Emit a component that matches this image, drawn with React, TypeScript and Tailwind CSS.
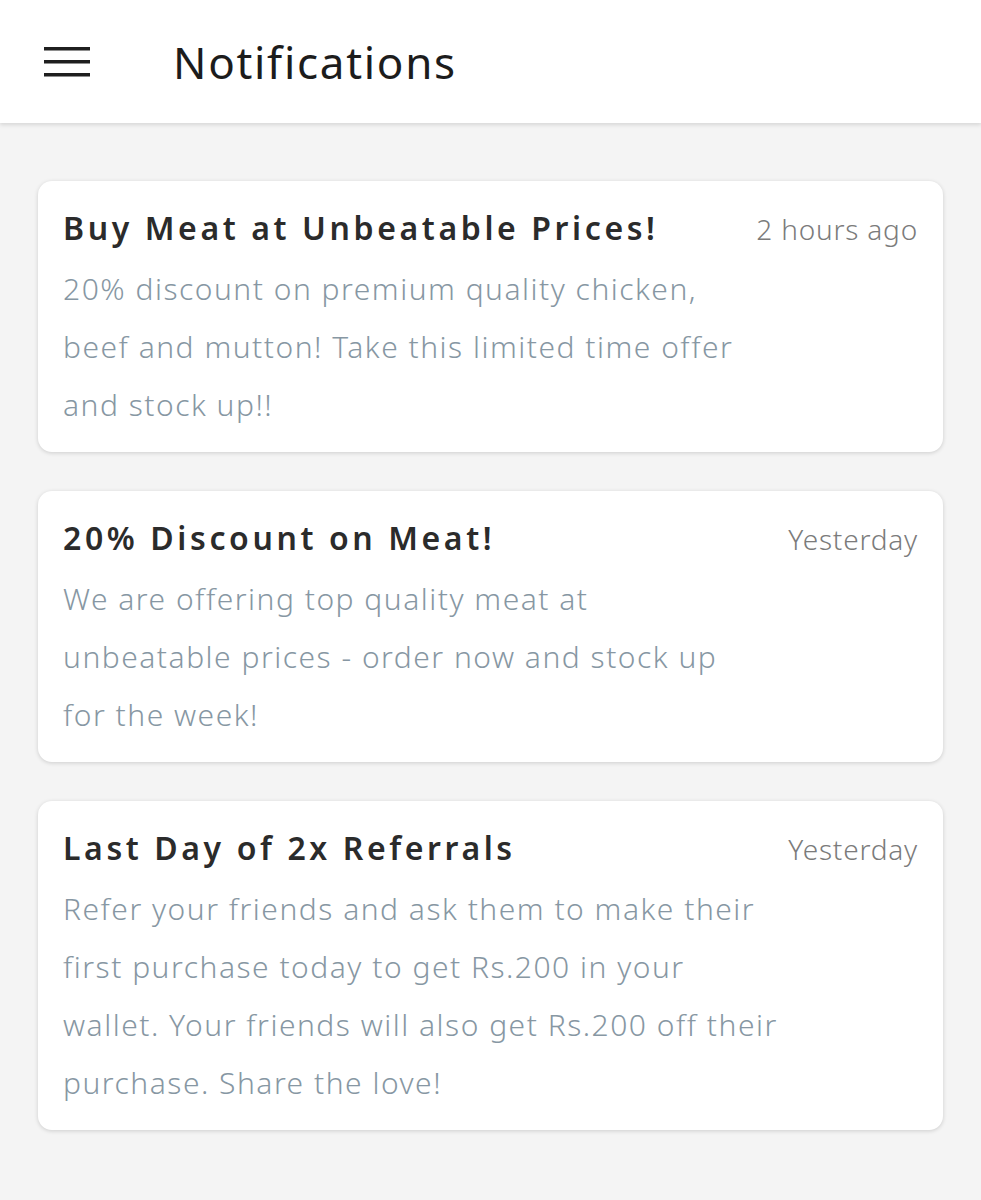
import React from "react";

interface Notificacion {
  id: number;
  titulo: string;
  cuando: string;
  lineas: string[];
}

const notificaciones: Notificacion[] = [
  {
    id: 1,
    titulo: "Buy Meat at Unbeatable Prices!",
    cuando: "2 hours ago",
    lineas: [
      "20% discount on premium quality chicken,",
      "beef and mutton! Take this limited time offer",
      "and stock up!!",
    ],
  },
  {
    id: 2,
    titulo: "20% Discount on Meat!",
    cuando: "Yesterday",
    lineas: [
      "We are offering top quality meat at",
      "unbeatable prices - order now and stock up",
      "for the week!",
    ],
  },
  {
    id: 3,
    titulo: "Last Day of 2x Referrals",
    cuando: "Yesterday",
    lineas: [
      "Refer your friends and ask them to make their",
      "first purchase today to get Rs.200 in your",
      "wallet. Your friends will also get Rs.200 off their",
      "purchase. Share the love!",
    ],
  },
];

function MenuIcon() {
  return (
    <svg width="46" height="30" viewBox="0 0 46 30" aria-hidden="true">
      <rect x="0" y="0" width="46" height="3.5" fill="#1f1f1f" />
      <rect x="0" y="13" width="46" height="3.5" fill="#1f1f1f" />
      <rect x="0" y="26" width="46" height="3.5" fill="#1f1f1f" />
    </svg>
  );
}

export default function App() {
  return (
    <div
      className="min-h-[1200px] bg-[#f4f4f4]"
      style={{ fontFamily: '"Noto Sans", "Open Sans", sans-serif' }}
    >
      <header className="relative z-10 flex h-[123px] items-center bg-white shadow-[0_2px_4px_rgba(0,0,0,0.12)]">
        <div className="ml-[44px] flex">
          <MenuIcon />
        </div>
        <h1 className="ml-[83px] text-[44px] leading-none tracking-[1.7px] text-[#1c1c1c]">
          Notifications
        </h1>
      </header>

      <main className="flex flex-col gap-[39px] px-[38px] pt-[58px]">
        {notificaciones.map((n) => (
          <article
            key={n.id}
            className="flex rounded-[14px] bg-white pb-[18px] pl-[25px] pr-[25px] pt-[20px] shadow-[0_1px_4px_rgba(0,0,0,0.16)]"
          >
            <div className="min-w-0 flex-1">
              <h2 className="mb-[8px] h-[51px] whitespace-nowrap text-[32px] font-semibold leading-[54px] tracking-[3.6px] text-[#2b2b2b]">
                {n.titulo}
              </h2>
              <div className="text-[30px] font-light leading-[58px] tracking-[1.5px] text-[#8797a3]">
                {n.lineas.map((linea) => (
                  <div key={linea} className="whitespace-nowrap">
                    {linea}
                  </div>
                ))}
              </div>
            </div>
            <span className="ml-4 shrink-0 pt-[8px] text-[28px] font-light leading-[40px] tracking-[0.8px] text-[#7b7b7b]">
              {n.cuando}
            </span>
          </article>
        ))}
      </main>
    </div>
  );
}
